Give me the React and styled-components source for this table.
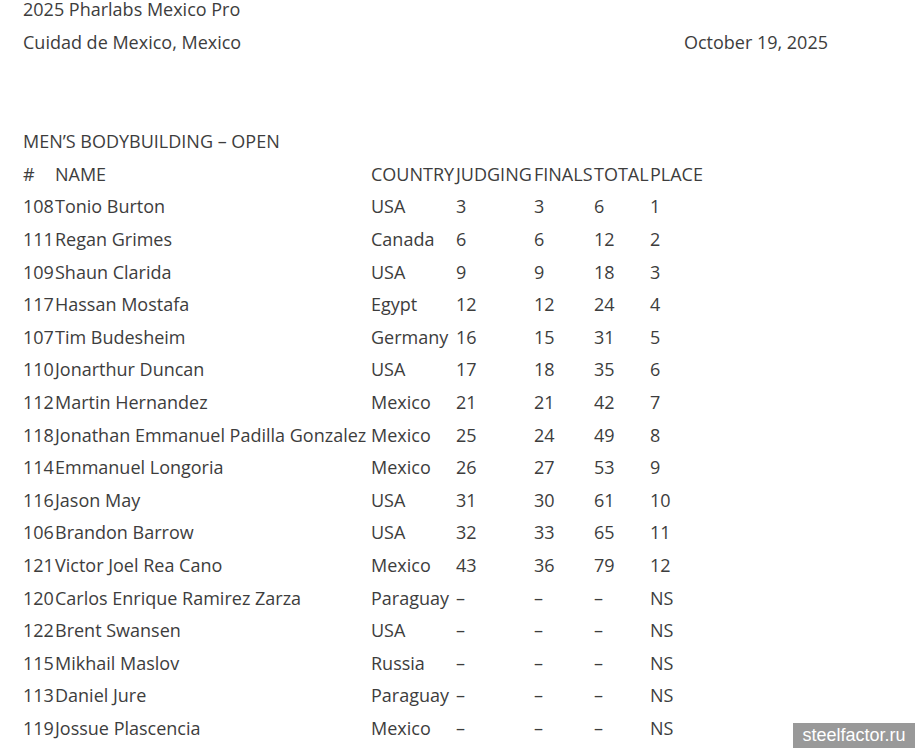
import React from 'react';
import styled, { createGlobalStyle } from 'styled-components';

const GlobalStyle = createGlobalStyle`
  body {
    margin: 0;
    background: #fff;
    font-family: "Open Sans", "DejaVu Sans", sans-serif;
    font-size: 18px;
    color: #3d3d3d;
    overflow: hidden;
  }
`;

const columns = [
  ['#', 32],
  ['NAME', 316],
  ['COUNTRY', 85],
  ['JUDGING', 78],
  ['FINALS', 60],
  ['TOTAL', 56],
  ['PLACE', 54],
];

const results = [
  ['108', 'Tonio Burton', 'USA', '3', '3', '6', '1'],
  ['111', 'Regan Grimes', 'Canada', '6', '6', '12', '2'],
  ['109', 'Shaun Clarida', 'USA', '9', '9', '18', '3'],
  ['117', 'Hassan Mostafa', 'Egypt', '12', '12', '24', '4'],
  ['107', 'Tim Budesheim', 'Germany', '16', '15', '31', '5'],
  ['110', 'Jonarthur Duncan', 'USA', '17', '18', '35', '6'],
  ['112', 'Martin Hernandez', 'Mexico', '21', '21', '42', '7'],
  ['118', 'Jonathan Emmanuel Padilla Gonzalez', 'Mexico', '25', '24', '49', '8'],
  ['114', 'Emmanuel Longoria', 'Mexico', '26', '27', '53', '9'],
  ['116', 'Jason May', 'USA', '31', '30', '61', '10'],
  ['106', 'Brandon Barrow', 'USA', '32', '33', '65', '11'],
  ['121', 'Victor Joel Rea Cano', 'Mexico', '43', '36', '79', '12'],
  ['120', 'Carlos Enrique Ramirez Zarza', 'Paraguay', '–', '–', '–', 'NS'],
  ['122', 'Brent Swansen', 'USA', '–', '–', '–', 'NS'],
  ['115', 'Mikhail Maslov', 'Russia', '–', '–', '–', 'NS'],
  ['113', 'Daniel Jure', 'Paraguay', '–', '–', '–', 'NS'],
  ['119', 'Jossue Plascencia', 'Mexico', '–', '–', '–', 'NS'],
];

const App = () => {
  return (
    <>
      <GlobalStyle />
      <Stpage>
        <Stline>2025 Pharlabs Mexico Pro</Stline>
        <Stmeta>
          <span>Cuidad de Mexico, Mexico</span>
          <span>October 19, 2025</span>
        </Stmeta>
        <Stsection>MEN’S BODYBUILDING – OPEN</Stsection>
        <Sttable>
          <colgroup>
            {columns.map(([label, w]) => (
              <Stcol key={label} $w={w} />
            ))}
          </colgroup>
          <thead>
            <tr>
              {columns.map(([label]) => (
                <Stth key={label}>{label}</Stth>
              ))}
            </tr>
          </thead>
          <tbody>
            {results.map((row) => (
              <tr key={row[0]}>
                {row.map((cell, i) => (
                  <Sttd key={i}>{cell}</Sttd>
                ))}
              </tr>
            ))}
          </tbody>
        </Sttable>
      </Stpage>
      <Stmark>steelfactor.ru</Stmark>
    </>
  );
};

export default App;

const Stpage = styled.div`
  margin-top: -7px;
  padding-left: 23px;
  line-height: 32.6px;
`;

const Stline = styled.div`
  white-space: nowrap;
`;

const Stmeta = styled.div`
  width: 805px;
  display: flex;
  justify-content: space-between;
`;

const Stsection = styled.div`
  margin-top: 67px;
`;

const Sttable = styled.table`
  border-collapse: collapse;
  border-spacing: 0;
  table-layout: fixed;
  font-size: 18px;
  line-height: 32.6px;
`;

const Stcol = styled.col`
  width: ${(p) => p.$w}px;
`;

const Stth = styled.th`
  padding: 0;
  font-weight: normal;
  text-align: left;
  white-space: nowrap;
`;

const Sttd = styled.td`
  padding: 0;
  text-align: left;
  white-space: nowrap;
`;

const Stmark = styled.div`
  position: fixed;
  right: 0;
  bottom: 0;
  width: 122px;
  height: 25px;
  background: #999;
  color: #fff;
  font-family: "Liberation Sans", Arial, sans-serif;
  font-size: 18px;
  line-height: 25px;
  text-align: center;
`;
